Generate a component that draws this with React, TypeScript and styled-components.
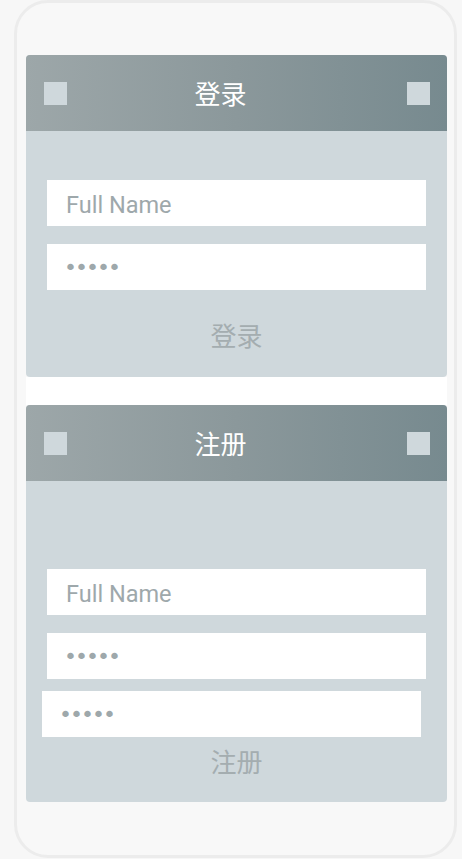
import React from "react";
import styled, { createGlobalStyle } from "styled-components";

const Global = createGlobalStyle`
  html, body {
    margin: 0;
    padding: 0;
    background: #f7f7f7;
    overflow: hidden;
  }
  body {
    font-family: Roboto, "Noto Sans CJK SC", sans-serif;
  }
`;

const Device = styled.div`
  box-sizing: border-box;
  margin-left: 14px;
  width: 443px;
  height: 858px;
  border: 3px solid #ececec;
  border-radius: 34px;
  background: #f8f8f8;
  padding: 52px 7px 0 9px;
`;

const Card = styled.section`
  border-radius: 4px;
  overflow: hidden;
  background: #cfd8dc;
`;

const Header = styled.header`
  box-sizing: border-box;
  height: 76px;
  display: flex;
  align-items: center;
  padding: 0 17px 0 18px;
  background: linear-gradient(90deg, #9da7a9 0%, #8b989b 50%, #778a8f 100%);
`;

const Square = styled.span`
  flex: none;
  width: 23px;
  height: 23px;
  background: #cfd8dc;
`;

const Title = styled.h2`
  flex: 1;
  margin: 0;
  padding-right: 33px;
  text-align: center;
  color: #ffffff;
  font: 400 26px/1 "Noto Sans CJK SC", sans-serif;
`;

const Body = styled.div<{ $top: number; $bottom: number }>`
  display: flex;
  flex-direction: column;
  padding: ${(p) => p.$top}px 21px ${(p) => p.$bottom}px;
`;

const Field = styled.input<{ $mt: number; $shift?: number }>`
  box-sizing: border-box;
  width: 379px;
  height: 46px;
  margin: ${(p) => p.$mt}px 0 0 ${(p) => -(p.$shift ?? 0)}px;
  border: none;
  outline: none;
  border-radius: 0;
  background: #ffffff;
  padding: 3px 19px 0;
  font: 400 23.5px Roboto, sans-serif;
  color: #9ea8ab;
  &::placeholder {
    color: #9ea8ab;
  }
  &[type="password"] {
    padding: 0 17px;
    font: 400 22px "DejaVu Sans", sans-serif;
    letter-spacing: -2px;
  }
`;

const Action = styled.button<{ $mt: number }>`
  align-self: center;
  height: 40px;
  margin-top: ${(p) => p.$mt}px;
  padding: 0;
  border: none;
  background: none;
  color: #a4adb0;
  font: 400 26px/40px "Noto Sans CJK SC", sans-serif;
`;

const Gap = styled.div`
  height: 28px;
  background: #ffffff;
`;

const CardHeader = ({ title }: { title: string }) => (
  <Header>
    <Square />
    <Title>{title}</Title>
    <Square />
  </Header>
);

export default function App() {
  return (
    <>
      <Global />
      <Device>
        <Card>
          <CardHeader title="登录" />
          <Body $top={49} $bottom={22}>
            <Field $mt={0} placeholder="Full Name" />
            <Field $mt={18} type="password" defaultValue="12345" />
            <Action $mt={25}>登录</Action>
          </Body>
        </Card>
        <Gap />
        <Card>
          <CardHeader title="注册" />
          <Body $top={88} $bottom={21}>
            <Field $mt={0} placeholder="Full Name" />
            <Field $mt={18} type="password" defaultValue="12345" />
            <Field $mt={12} $shift={5} type="password" defaultValue="12345" />
            <Action $mt={4}>注册</Action>
          </Body>
        </Card>
      </Device>
    </>
  );
}
